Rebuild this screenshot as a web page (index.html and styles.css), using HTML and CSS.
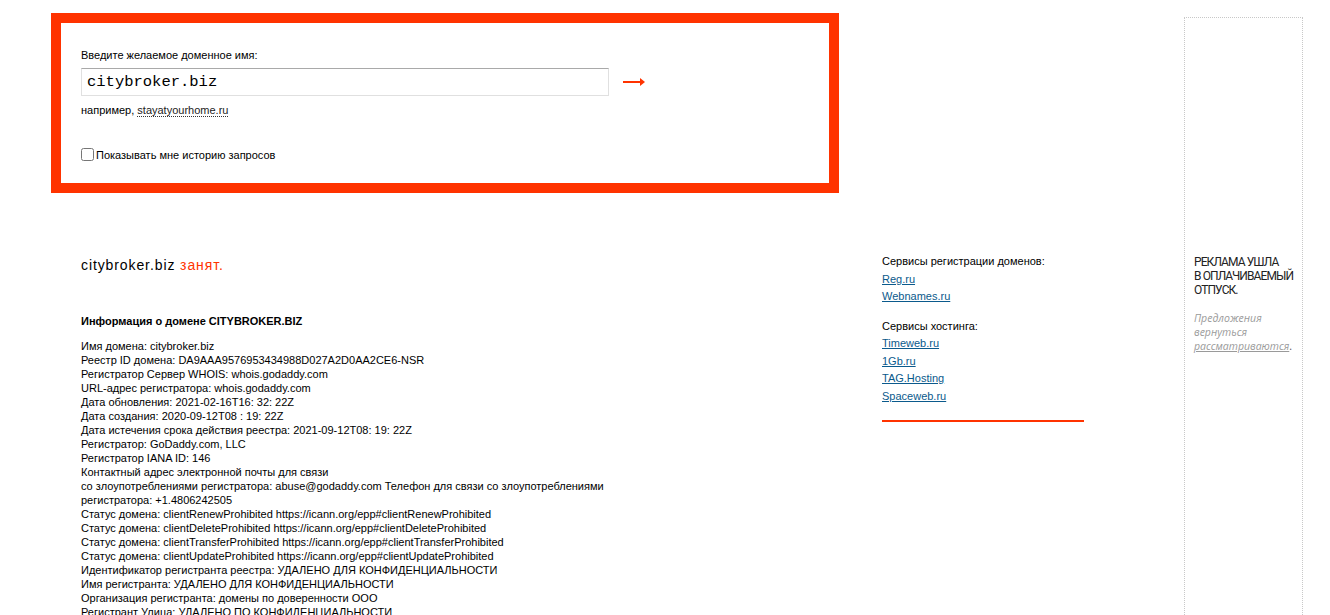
FILE: index.html
```html
<!DOCTYPE html>
<html lang="ru">
  <head>
    <meta charset="UTF-8" />
    <meta name="viewport" content="width=device-width, initial-scale=1.0" />
    <title>Проверка домена</title>
    <link rel="stylesheet" href="styles.css">
  </head>
  <body>
    <div class="page">
      <div class="content">
        <form class="search-box">
          <label class="search-label" for="domain">Введите желаемое доменное имя:</label>
          <div class="search-row">
            <input class="search-input" id="domain" type="text" value="citybroker.biz">
            <button class="search-go" type="submit" title="Проверить">
              <svg width="24" height="10" viewBox="0 0 24 10">
                <path d="M0 5 H19" stroke="#ff3300" stroke-width="2" />
                <path d="M17 1 L22 5 L17 9 Z" fill="#ff3300" />
              </svg>
            </button>
          </div>
          <div class="search-hint">например, <a href="#" class="hint-link">stayatyourhome.ru</a></div>
          <label class="history"><input type="checkbox" class="history-check">Показывать мне историю запросов</label>
        </form>

        <div class="results">
          <div class="whois">
            <div class="whois-title">citybroker.biz <span class="busy">занят.</span></div>
            <h3 class="whois-heading">Информация о домене CITYBROKER.BIZ</h3>
            <div class="whois-data">
              Имя домена: citybroker.biz<br>
              Реестр ID домена: DA9AAA9576953434988D027A2D0AA2CE6-NSR<br>
              Регистратор Сервер WHOIS: whois.godaddy.com<br>
              URL-адрес регистратора: whois.godaddy.com<br>
              Дата обновления: 2021-02-16T16: 32: 22Z<br>
              Дата создания: 2020-09-12T08 : 19: 22Z<br>
              Дата истечения срока действия реестра: 2021-09-12T08: 19: 22Z<br>
              Регистратор: GoDaddy.com, LLC<br>
              Регистратор IANA ID: 146<br>
              Контактный адрес электронной почты для связи<br>
              со злоупотреблениями регистратора: abuse@godaddy.com Телефон для связи со злоупотреблениями<br>
              регистратора: +1.4806242505<br>
              Статус домена: clientRenewProhibited https://icann.org/epp#clientRenewProhibited<br>
              Статус домена: clientDeleteProhibited https://icann.org/epp#clientDeleteProhibited<br>
              Статус домена: clientTransferProhibited https://icann.org/epp#clientTransferProhibited<br>
              Статус домена: clientUpdateProhibited https://icann.org/epp#clientUpdateProhibited<br>
              Идентификатор регистранта реестра: УДАЛЕНО ДЛЯ КОНФИДЕНЦИАЛЬНОСТИ<br>
              Имя регистранта: УДАЛЕНО ДЛЯ КОНФИДЕНЦИАЛЬНОСТИ<br>
              Организация регистранта: домены по доверенности ООО<br>
              Регистрант Улица: УДАЛЕНО ПО КОНФИДЕНЦИАЛЬНОСТИ
            </div>
          </div>

          <div class="services">
            <div class="services-title">Сервисы регистрации доменов:</div>
            <a href="#" class="service-link">Reg.ru</a>
            <a href="#" class="service-link">Webnames.ru</a>
            <div class="services-title second">Сервисы хостинга:</div>
            <a href="#" class="service-link">Timeweb.ru</a>
            <a href="#" class="service-link">1Gb.ru</a>
            <a href="#" class="service-link">TAG.Hosting</a>
            <a href="#" class="service-link">Spaceweb.ru</a>
            <div class="services-line"></div>
          </div>
        </div>
      </div>

      <div class="ad">
        <div class="ad-title">Реклама ушла<br>в оплачиваемый<br>отпуск.</div>
        <div class="ad-note"><i>Предложения вернуться <a href="#" class="ad-link">рассматриваются</a></i>.</div>
      </div>
    </div>
  </body>
</html>
```

FILE: styles.css
```css
body {
  margin: 0;
  background: #fff;
  color: #000;
  font-family: "Liberation Sans", Arial, sans-serif;
  font-size: 11px;
  line-height: 14px;
}

.page {
  display: flex;
  padding-left: 51px;
  height: 615px;
  overflow: hidden;
}

.content {
  width: 1133px;
}

/* search form */

.search-box {
  box-sizing: border-box;
  width: 788px;
  height: 180px;
  margin: 13px 0 0;
  border: 10px solid #ff3300;
  padding: 25px 0 0 20px;
}

.search-label {
  display: block;
}

.search-row {
  display: flex;
  align-items: center;
  margin-top: 6px;
}

.search-input {
  box-sizing: border-box;
  width: 528px;
  height: 28px;
  margin: 0;
  padding: 0 5px;
  border: 1px solid #e0e0e0;
  border-top-color: #a9a9a9;
  font-family: "Liberation Mono", "Courier New", monospace;
  font-size: 15.5px;
  color: #000;
  outline: none;
}

.search-go {
  display: flex;
  margin: 0 0 0 14px;
  padding: 0;
  border: none;
  background: none;
  cursor: pointer;
}

.search-hint {
  margin-top: 7px;
}

.hint-link {
  color: #222;
  text-decoration: none;
  border-bottom: 1px dotted #333;
}

.history {
  display: flex;
  align-items: center;
  margin-top: 31px;
}

.history-check {
  width: 13px;
  height: 13px;
  margin: -2px 2px 0 0;
}

/* results */

.results {
  display: flex;
  margin-top: 57px;
}

.whois {
  box-sizing: border-box;
  width: 831px;
  padding-left: 30px;
}

.whois-title {
  margin-top: 5px;
  font-size: 14px;
  line-height: 20px;
  letter-spacing: 0.9px;
}

.busy {
  color: #ff3300;
}

.whois-heading {
  margin: 39px 0 0;
  font-size: 11px;
  line-height: 14px;
  font-weight: bold;
}

.whois-data {
  margin-top: 11px;
}

.services {
  display: flex;
  flex-direction: column;
  align-items: flex-start;
  width: 202px;
  padding-top: 3px;
  line-height: 17.5px;
}

.services-title.second {
  margin-top: 12px;
}

.service-link {
  color: #0b5a8c;
  text-decoration: underline;
}

.services-line {
  align-self: stretch;
  height: 2px;
  margin-top: 15px;
  background: #ff3300;
}

/* ad column */

.ad {
  box-sizing: border-box;
  width: 119px;
  height: 800px;
  margin-top: 17px;
  padding: 237px 0 0 9px;
  border: 1px dotted #c8c8c8;
}

.ad-title {
  font-family: Roboto, "Liberation Sans", sans-serif;
  font-size: 12px;
  line-height: 14px;
  letter-spacing: -0.9px;
  text-transform: uppercase;
  color: #222;
}

.ad-note {
  margin-top: 14px;
  font-family: "Open Sans", "Liberation Sans", sans-serif;
  font-size: 10.5px;
  line-height: 14px;
  color: #555;
}

.ad-note i {
  color: #9a9a9a;
}

.ad-link {
  color: #9a9a9a;
  text-decoration: underline;
}
```
